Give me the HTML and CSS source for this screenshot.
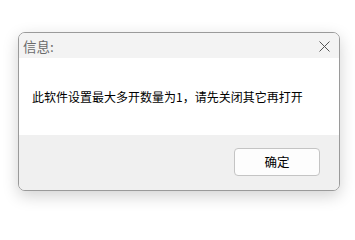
FILE: index.html
```html
<!DOCTYPE html>
<html lang="zh">
<head>
<meta charset="utf-8">
<link rel="stylesheet" href="styles.css">
</head>
<body>
<div class="dialog">
  <div class="titlebar">
    <span class="title">信息:</span>
    <svg class="close" width="11" height="11" viewBox="0 0 11 11"><path d="M0.5 0.5 L10.5 10.5 M10.5 0.5 L0.5 10.5" stroke="#555" stroke-width="1" fill="none"/></svg>
  </div>
  <div class="content">
    <p class="message">此软件设置最大多开数量为1，请先关闭其它再打开</p>
  </div>
  <div class="footer">
    <button class="ok">确定</button>
  </div>
</div>
</body>
</html>
```
FILE: styles.css
```css
html, body {
  margin: 0;
  padding: 0;
  background: #ffffff;
  width: 355px;
  height: 213px;
  overflow: hidden;
}
body {
  font-family: "Noto Sans CJK SC", "Noto Sans", sans-serif;
  padding-top: 32px;
  padding-left: 18px;
  box-sizing: border-box;
}
.dialog {
  width: 322px;
  height: 159px;
  box-sizing: border-box;
  border: 1px solid #9a9a9a;
  border-radius: 7px;
  overflow: hidden;
  display: flex;
  flex-direction: column;
  box-shadow: 0 5px 16px rgba(0,0,0,0.18);
  background: #fff;
}
.titlebar {
  height: 25px;
  background: #f3f3f3;
  display: flex;
  align-items: center;
  justify-content: space-between;
  padding: 0 9px 0 4px;
  flex: none;
}
.title {
  font-size: 13.5px;
  color: #6a6a6a;
  line-height: 13px;
  margin-top: 1px;
}
.close {
  display: block;
  margin-top: 1px;
}
.content {
  height: 77px;
  background: #fff;
  flex: none;
  display: flex;
  align-items: center;
  padding-left: 13px;
}
.message {
  margin: 0;
  font-size: 12px;
  line-height: 12px;
  color: #000;
  margin-top: 1px;
}
.footer {
  flex: 1;
  background: #f0f0f0;
  display: flex;
  justify-content: flex-end;
  align-items: flex-start;
  padding: 13px 19px 0 0;
}
.ok {
  width: 86px;
  height: 28px;
  box-sizing: border-box;
  border: 1px solid #c4c4c4;
  border-radius: 4px;
  background: #fdfdfd;
  font-family: "Noto Sans CJK SC", sans-serif;
  font-size: 12.5px;
  line-height: 12px;
  color: #000;
  padding: 0;
}
```
